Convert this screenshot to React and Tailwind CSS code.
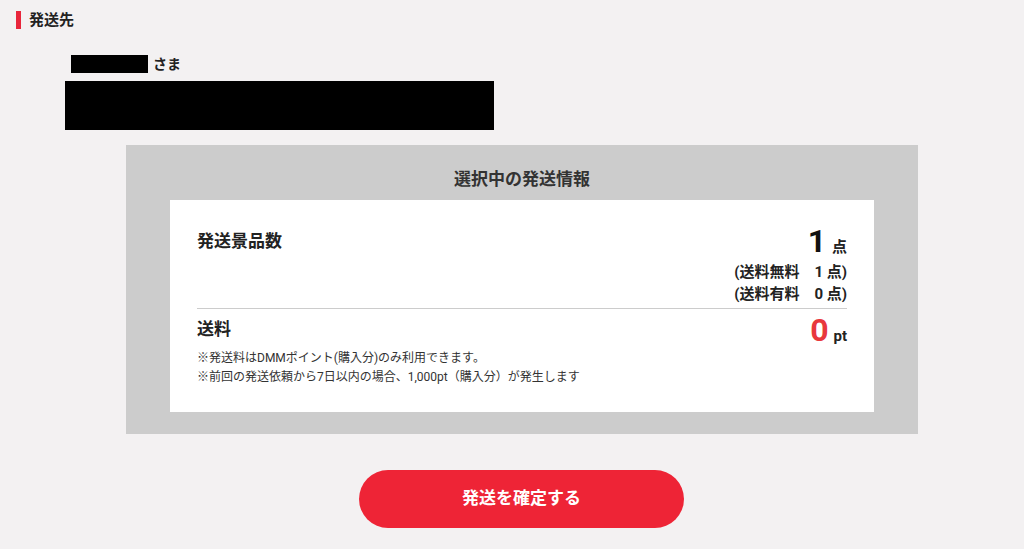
export default function App() {
  return (
    <div
      className="min-h-[549px] w-full bg-[#f3f1f2] text-[#222]"
      style={{ fontFamily: 'Roboto, "Noto Sans CJK JP", sans-serif' }}
    >
      <div className="pt-[11px] pl-[16px] flex items-center gap-[8px]">
        <div className="w-[5px] h-[18px] bg-[#e8263b]" />
        <h2 className="text-[15px] font-bold leading-[18px]">発送先</h2>
      </div>
      <div className="pl-[65px] mt-[26px]">
        <div className="flex items-center pl-[6px] h-[18px]">
          <div className="w-[77px] h-[18px] bg-black" />
          <span className="ml-[5px] text-[14px] font-bold leading-[18px]">さま</span>
        </div>
        <div className="mt-[8px] w-[429px] h-[49px] bg-black" />
      </div>
      <div className="mt-[15px] ml-[126px] w-[792px] h-[289px] bg-[#cccccc] px-[44px] pt-[22px]">
        <h3 className="text-center text-[17px] font-bold text-[#333] leading-[24px]">
          選択中の発送情報
        </h3>
        <div className="mt-[9px] bg-white h-[212px] px-[27px] pt-[26px]">
          <div className="flex justify-between">
            <div className="text-[17px] font-bold leading-[22px] mt-[4px]">発送景品数</div>
            <div className="flex flex-col items-end">
              <div className="flex items-baseline">
                <span className="text-[32px] font-bold leading-[30px] text-[#111]">1</span>
                <span className="ml-[6px] text-[15px] font-bold">点</span>
              </div>
              <div className="mt-[2px] text-[15px] font-bold leading-[22px] text-right">
                <div>(送料無料　1 点)</div>
                <div>(送料有料　0 点)</div>
              </div>
            </div>
          </div>
          <div className="mt-[3px] border-t border-[#cccccc]" />
          <div className="flex justify-between mt-[9px]">
            <div>
              <div className="text-[17px] font-bold leading-[22px]">送料</div>
              <div className="mt-[9px] text-[12px] leading-[19px] text-[#333]">
                <div>※発送料はDMMポイント(購入分)のみ利用できます。</div>
                <div>※前回の発送依頼から7日以内の場合、1,000pt（購入分）が発生します</div>
              </div>
            </div>
            <div className="flex items-baseline h-[30px] -mt-[3px]">
              <span className="text-[32px] font-bold leading-[30px] text-[#e8383d]">0</span>
              <span className="ml-[5px] text-[15px] font-bold">pt</span>
            </div>
          </div>
        </div>
      </div>
      <div className="flex justify-center mt-[36px] pl-[19px]">
        <button className="w-[325px] h-[58px] rounded-full bg-[#ee2436] text-white text-[17px] font-bold">
          発送を確定する
        </button>
      </div>
    </div>
  );
}
